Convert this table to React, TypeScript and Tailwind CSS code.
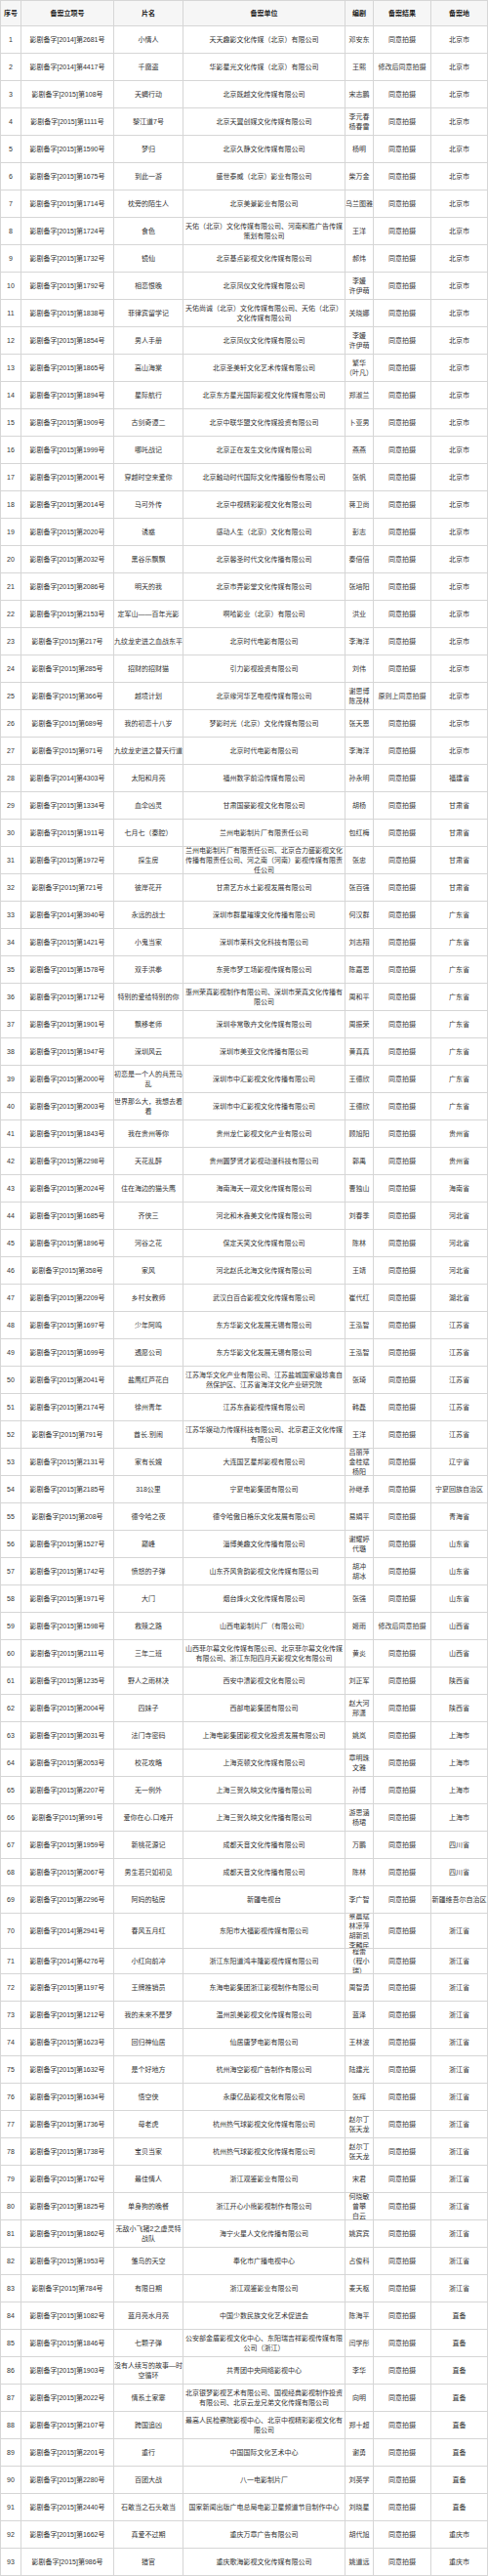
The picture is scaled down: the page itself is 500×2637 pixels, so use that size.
import React from 'react';

type Row = [number, string, string, string, string, string?, string?];

// [序号, 备案立项号, 片名, 备案单位, 编剧(用 / 分行), 备案结果, 备案地]
const rows: Row[] = [
  [1, '影剧备字[2014]第2681号', '小情人', '天天趣影文化传媒（北京）有限公司', '邓安东', '', '北京市'],
  [2, '影剧备字[2014]第4417号', '千魔盗', '华影星光文化传媒（北京）有限公司', '王熙', '修改后同意拍摄', '北京市'],
  [3, '影剧备字[2015]第108号', '天蝎行动', '北京既越文化传媒有限公司', '宋志鹏', '', '北京市'],
  [4, '影剧备字[2015]第1111号', '黎江道7号', '北京天翼创媒文化传媒有限公司', '李元春/杨春雷', '', '北京市'],
  [5, '影剧备字[2015]第1590号', '梦归', '北京久静文化传媒有限公司', '杨明', '', '北京市'],
  [6, '影剧备字[2015]第1675号', '到此一游', '盛世泰威（北京）影业有限公司', '柴万金', '', '北京市'],
  [7, '影剧备字[2015]第1714号', '枕旁的陌生人', '北京美景影业有限公司', '乌兰图雅', '', '北京市'],
  [8, '影剧备字[2015]第1724号', '食色', '天佑（北京）文化传媒有限公司、河南和胜广告传媒策划有限公司', '王洋', '', '北京市'],
  [9, '影剧备字[2015]第1732号', '镜仙', '北京基点影视文化传媒有限公司', '郝炜', '', '北京市'],
  [10, '影剧备字[2015]第1792号', '相恋恨晚', '北京凤仪文化传媒有限公司', '李媛/许伊萌', '', '北京市'],
  [11, '影剧备字[2015]第1838号', '菲律宾留学记', '天佑尚诚（北京）文化传媒有限公司、天佑（北京）文化传媒有限公司', '关晓娜', '', '北京市'],
  [12, '影剧备字[2015]第1854号', '男人手册', '北京凤仪文化传媒有限公司', '李媛/许伊萌', '', '北京市'],
  [13, '影剧备字[2015]第1865号', '高山海棠', '北京圣美轩文化艺术传媒有限公司', '繁华/（叶凡）', '', '北京市'],
  [14, '影剧备字[2015]第1894号', '星际航行', '北京东方星光国际影视文化传媒有限公司', '郑淑兰', '', '北京市'],
  [15, '影剧备字[2015]第1909号', '古剑奇谭二', '北京中联华盟文化传媒投资有限公司', '卜亚男', '', '北京市'],
  [16, '影剧备字[2015]第1999号', '哪吒战记', '北京正在发生文化传媒有限公司', '燕燕', '', '北京市'],
  [17, '影剧备字[2015]第2001号', '穿越时空来爱你', '北京触动时代国际文化传播股份有限公司', '张帆', '', '北京市'],
  [18, '影剧备字[2015]第2014号', '马可外传', '北京中视精彩影视文化有限公司', '蒋卫尚', '', '北京市'],
  [19, '影剧备字[2015]第2020号', '诱惑', '感动人生（北京）文化有限公司', '彭志', '', '北京市'],
  [20, '影剧备字[2015]第2032号', '黑谷乐飘飘', '北京馨圣时代文化传播有限公司', '秦倍倍', '', '北京市'],
  [21, '影剧备字[2015]第2086号', '明天的我', '北京市弄影堂文化传媒有限公司', '张培阳', '', '北京市'],
  [22, '影剧备字[2015]第2153号', '定军山——百年光影', '啊哈影业（北京）有限公司', '洪业', '', '北京市'],
  [23, '影剧备字[2015]第217号', '九纹龙史进之血战东平', '北京时代电影有限公司', '李海洋', '', '北京市'],
  [24, '影剧备字[2015]第285号', '招财的招财猫', '引力影视投资有限公司', '刘伟', '', '北京市'],
  [25, '影剧备字[2015]第366号', '越境计划', '北京缘河华艺电视传媒有限公司', '谢思博/陈茂林', '原则上同意拍摄', '北京市'],
  [26, '影剧备字[2015]第689号', '我的初恋十八岁', '梦影时光（北京）文化传媒有限公司', '张天恩', '', '北京市'],
  [27, '影剧备字[2015]第971号', '九纹龙史进之替天行道', '北京时代电影有限公司', '李海洋', '', '北京市'],
  [28, '影剧备字[2014]第4303号', '太阳和月亮', '福州数字前沿传媒有限公司', '孙永明', '', '福建省'],
  [29, '影剧备字[2015]第1334号', '血伞凶灵', '甘肃国豪影视文化有限公司', '胡杨', '', '甘肃省'],
  [30, '影剧备字[2015]第1911号', '七月七（秦腔）', '兰州电影制片厂有限责任公司', '包红梅', '', '甘肃省'],
  [31, '影剧备字[2015]第1972号', '探生房', '兰州电影制片厂有限责任公司、北京合力盛影视文化传播有限责任公司、河之南（河南）影视传媒有限责任公司', '张忠', '', '甘肃省'],
  [32, '影剧备字[2015]第721号', '彼岸花开', '甘肃艺方水土影视发展有限公司', '张百强', '', '甘肃省'],
  [33, '影剧备字[2014]第3940号', '永远的战士', '深圳市群星璀璨文化传播有限公司', '何汉群', '', '广东省'],
  [34, '影剧备字[2015]第1421号', '小鬼当家', '深圳市莱科文化科技有限公司', '刘志翔', '', '广东省'],
  [35, '影剧备字[2015]第1578号', '双手洪拳', '东莞市梦工场影视传媒有限公司', '陈嘉恩', '', '广东省'],
  [36, '影剧备字[2015]第1712号', '特别的爱给特别的你', '惠州荣真影视制作有限公司、深圳市荣真文化传播有限公司', '周和平', '', '广东省'],
  [37, '影剧备字[2015]第1901号', '飘移老师', '深圳非常敬卉文化传媒有限公司', '周振荣', '', '广东省'],
  [38, '影剧备字[2015]第1947号', '深圳风云', '深圳市美亚文化传播有限公司', '黄真真', '', '广东省'],
  [39, '影剧备字[2015]第2000号', '初恋是一个人的兵荒马乱', '深圳市中汇影视文化传播有限公司', '王德欣', '', '广东省'],
  [40, '影剧备字[2015]第2003号', '世界那么大，我想去看看', '深圳市中汇影视文化传播有限公司', '王德欣', '', '广东省'],
  [41, '影剧备字[2015]第1843号', '我在贵州等你', '贵州龙仁影视文化产业有限公司', '顾旭阳', '', '贵州省'],
  [42, '影剧备字[2015]第2298号', '天花乱醉', '贵州圆梦贤才影视动漫科技有限公司', '郭禹', '', '贵州省'],
  [43, '影剧备字[2015]第2024号', '住在海边的猫头鹰', '海南海天一观文化传媒有限公司', '曹独山', '', '海南省'],
  [44, '影剧备字[2015]第1685号', '齐侠三', '河北和木鑫美文化传媒有限公司', '刘春季', '', '河北省'],
  [45, '影剧备字[2015]第1896号', '河谷之花', '保定天笑文化传媒有限公司', '陈林', '', '河北省'],
  [46, '影剧备字[2015]第358号', '家风', '河北赵氏北海文化传媒有限公司', '王靖', '', '河北省'],
  [47, '影剧备字[2015]第2209号', '乡村女教师', '武汉白百合影视文化传媒有限公司', '崔代红', '', '湖北省'],
  [48, '影剧备字[2015]第1697号', '少年阿鸣', '东方华影文化发展无锡有限公司', '王泓智', '', '江苏省'],
  [49, '影剧备字[2015]第1699号', '透愿公司', '东方华影文化发展无锡有限公司', '王泓智', '', '江苏省'],
  [50, '影剧备字[2015]第2041号', '盐鹰红芦花白', '江苏海华文化产业有限公司、江苏盐城国家级珍禽自然保护区、江苏省海洋文化产业研究院', '张琦', '', '江苏省'],
  [51, '影剧备字[2015]第2174号', '徐州青年', '江苏东鑫影视传媒有限公司', '韩磊', '', '江苏省'],
  [52, '影剧备字[2015]第791号', '酋长.别闹', '江苏华娱动力传媒科技有限公司、北京君正文化传媒有限公司', '王洋', '', '江苏省'],
  [53, '影剧备字[2015]第2131号', '家有长嫂', '大连国艺星邦影视有限公司', '吕丽萍/金桂斌/杨阳', '', '辽宁省'],
  [54, '影剧备字[2015]第2185号', '318公里', '宁夏电影集团有限公司', '孙继承', '', '宁夏回族自治区'],
  [55, '影剧备字[2015]第208号', '德令哈之夜', '德令哈傲日格乐文化发展有限公司', '易娟平', '', '青海省'],
  [56, '影剧备字[2015]第1527号', '巅峰', '淄博美趣文化传播有限公司', '谢耀婷/代璐', '', '山东省'],
  [57, '影剧备字[2015]第1742号', '愤怒的子弹', '山东齐风鲁韵影视文化传媒有限公司', '胡冲/胡冰', '', '山东省'],
  [58, '影剧备字[2015]第1971号', '大门', '烟台烽火文化传媒有限公司', '张强', '', '山东省'],
  [59, '影剧备字[2015]第1598号', '救赎之路', '山西电影制片厂（有限公司）', '姬雨', '修改后同意拍摄', '山西省'],
  [60, '影剧备字[2015]第2111号', '三年二班', '山西菲尔幕文化传媒有限公司、北京菲尔幕文化传媒有限公司、浙江东阳四月天影视文化有限公司', '黄炎', '', '山西省'],
  [61, '影剧备字[2015]第1235号', '野人之雨林决', '西安中溃影视文化有限公司', '刘正军', '', '陕西省'],
  [62, '影剧备字[2015]第2004号', '四妹子', '西部电影集团有限公司', '赵大河/邢潇', '', '陕西省'],
  [63, '影剧备字[2015]第2031号', '法门寺密码', '上海电影集团影视文化投资发展有限公司', '姚岚', '', '上海市'],
  [64, '影剧备字[2015]第2053号', '校花攻略', '上海克顿文化传媒有限公司', '章明珠/文雅', '', '上海市'],
  [65, '影剧备字[2015]第2207号', '无一例外', '上海三贺久映文化传播有限公司', '孙博', '', '上海市'],
  [66, '影剧备字[2015]第991号', '爱你在心.口难开', '上海三贺久映文化传播有限公司', '游思涵/杨珺', '', '上海市'],
  [67, '影剧备字[2015]第1959号', '新桃花源记', '成都天音文化传播有限公司', '万鹏', '', '四川省'],
  [68, '影剧备字[2015]第2067号', '男生若只如初见', '成都天音文化传播有限公司', '陈林', '', '四川省'],
  [69, '影剧备字[2015]第2296号', '阿妈的毡房', '新疆电视台', '李广智', '', '新疆维吾尔自治区'],
  [70, '影剧备字[2014]第2941号', '春风五月红', '东阳市大福影视传媒有限公司', '蔡晨斌/林凉萍/胡新凯/李麟民', '', '浙江省'],
  [71, '影剧备字[2014]第4276号', '小红向前冲', '浙江东阳道鸿丰隆影视传媒有限公司', '程蕾/（程小/瑞）', '', '浙江省'],
  [72, '影剧备字[2015]第1197号', '王牌推销员', '东海电影集团浙江影视制作有限公司', '周智勇', '', '浙江省'],
  [73, '影剧备字[2015]第1212号', '我的未来不是梦', '温州凯美影视文化传媒有限公司', '蓝泽', '', '浙江省'],
  [74, '影剧备字[2015]第1623号', '回归神仙居', '仙居唐梦电影有限公司', '王林波', '', '浙江省'],
  [75, '影剧备字[2015]第1632号', '是个好地方', '杭州海空影视广告制作有限公司', '陆建光', '', '浙江省'],
  [76, '影剧备字[2015]第1634号', '悟空侠', '永康亿品影视文化有限公司', '张辉', '', '浙江省'],
  [77, '影剧备字[2015]第1736号', '母老虎', '杭州热气球影视文化传媒有限公司', '赵尔丁/张天龙', '', '浙江省'],
  [78, '影剧备字[2015]第1738号', '宝贝当家', '杭州热气球影视文化传媒有限公司', '赵尔丁/张天龙', '', '浙江省'],
  [79, '影剧备字[2015]第1762号', '最佳情人', '浙江观鉴影业有限公司', '宋君', '', '浙江省'],
  [80, '影剧备字[2015]第1825号', '单身狗的晚餐', '浙江开心小熊影视制作有限公司', '何晓敏/曾攀/白云', '', '浙江省'],
  [81, '影剧备字[2015]第1862号', '无敌小飞猪2之虚灵特战队', '海宁火星人文化传播有限公司', '姚宾宾', '', '浙江省'],
  [82, '影剧备字[2015]第1953号', '雏鸟的天空', '奉化市广播电视中心', '占俊科', '', '浙江省'],
  [83, '影剧备字[2015]第784号', '有限日期', '浙江观鉴影业有限公司', '麦天枢', '', '浙江省'],
  [84, '影剧备字[2015]第1082号', '蓝月亮水月亮', '中国少数民族文化艺术促进会', '陈海平', '', '直备'],
  [85, '影剧备字[2015]第1846号', '七颗子弹', '公安部金盾影视文化中心、东阳瑞吉祥影视传媒有限公司（浙江）', '闫学彤', '', '直备'],
  [86, '影剧备字[2015]第1903号', '没有人续写的故事—时空循环', '共青团中央网络影视中心', '李华', '', '直备'],
  [87, '影剧备字[2015]第2022号', '情系土家寨', '北京银梦影视艺术有限公司、国视经典影视制作投资有限公司、北京云龙兄弟文化传媒有限公司', '向明', '', '直备'],
  [88, '影剧备字[2015]第2107号', '跨国追凶', '最高人民检察院影视中心、北京中视精彩影视文化有限公司', '郑十超', '', '直备'],
  [89, '影剧备字[2015]第2201号', '重行', '中国国际文化艺术中心', '谢勇', '', '直备'],
  [90, '影剧备字[2015]第2280号', '百团大战', '八一电影制片厂', '刘英学', '', '直备'],
  [91, '影剧备字[2015]第2440号', '石敢当之石头敢当', '国家新闻出版广电总局电影卫星频道节目制作中心', '刘晓星', '', '直备'],
  [92, '影剧备字[2015]第1662号', '真爱不过期', '重庆万章广告有限公司', '胡代旭', '', '重庆市'],
  [93, '影剧备字[2015]第986号', '猎官', '重庆歌海影视文化传媒有限公司', '姚道远', '', '重庆市'],
];

const cols = 'grid grid-cols-[22px_95px_71px_166px_29px_59px_58px]';
const cell =
  'flex items-center justify-center text-center border-r border-b border-[#d6d6d6] overflow-hidden';

function rowHeight(id: number) {
  if (id === 70) return 'h-[36px]';
  if (id === 71) return 'h-[26px]';
  return 'h-[28px]';
}

export default function App() {
  return (
    <div
      className="w-[500px] bg-white text-[#333] text-[7px] leading-[10px]"
      style={{ fontFamily: '"Liberation Sans", "Noto Sans CJK SC", sans-serif' }}
    >
      <div className={`${cols} h-[27px] bg-[#f6f6f6] font-bold text-[#222] border-t border-[#d6d6d6]`}>
        <div className={`${cell} border-l`}>序号</div>
        <div className={cell}>备案立项号</div>
        <div className={cell}>片名</div>
        <div className={cell}>备案单位</div>
        <div className={cell}>编剧</div>
        <div className={cell}>备案结果</div>
        <div className={cell}>备案地</div>
      </div>

      {rows.map(([id, no, title, company, writers, result, place]) => (
        <div key={id} className={`${cols} ${rowHeight(id)}`}>
          <div className={`${cell} border-l`}>{id}</div>
          <div className={`${cell} whitespace-nowrap`}>{no}</div>
          <div className={cell}>{title}</div>
          <div className={`${cell} px-[1px]`}>{company}</div>
          <div className={`${cell} flex-col whitespace-nowrap`}>
            {writers.split('/').map((w, i) => (
              <span key={i}>{w}</span>
            ))}
          </div>
          <div className={`${cell} whitespace-nowrap`}>{result || '同意拍摄'}</div>
          <div className={`${cell} whitespace-nowrap`}>{place}</div>
        </div>
      ))}
    </div>
  );
}
